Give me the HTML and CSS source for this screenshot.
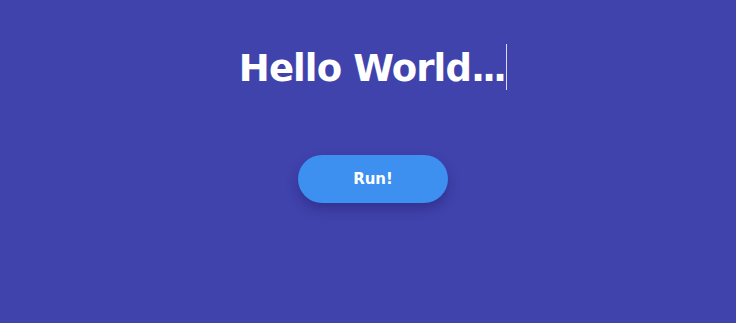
FILE: index.html
```html
<!DOCTYPE html>
<html>
<head>
<meta charset="utf-8">
<link rel="stylesheet" href="styles.css">
</head>
<body>
<main class="page">
  <h1 class="title"><span class="text">Hello World<span class="dots">...</span></span><span class="cursor"></span></h1>
  <button class="run">Run!</button>
</main>
</body>
</html>
```
FILE: styles.css
```css
html, body {
  margin: 0;
  padding: 0;
  height: 100%;
  background: #4143ad;
}
.page {
  display: flex;
  flex-direction: column;
  align-items: center;
  padding-top: 44px;
  padding-left: 10px;
  font-family: "DejaVu Sans", sans-serif;
}
.title {
  margin: 0;
  display: flex;
  align-items: center;
  height: 46px;
  color: #ffffff;
  font-size: 37px;
  font-weight: 700;
  letter-spacing: -0.9px;
}
.text {
  padding-top: 2px;
}
.dots {
  letter-spacing: -3px;
}
.cursor {
  display: block;
  width: 1px;
  height: 46px;
  background: #dcdcf0;
  margin-left: 2px;
}
.run {
  margin-top: 65px;
  width: 150px;
  height: 48px;
  border: none;
  border-radius: 24px;
  background: #3d8ff0;
  color: #ffffff;
  font-family: "DejaVu Sans", sans-serif;
  font-weight: 700;
  font-size: 15px;
  box-shadow: 0 6px 12px rgba(20, 20, 90, 0.35);
}
```
